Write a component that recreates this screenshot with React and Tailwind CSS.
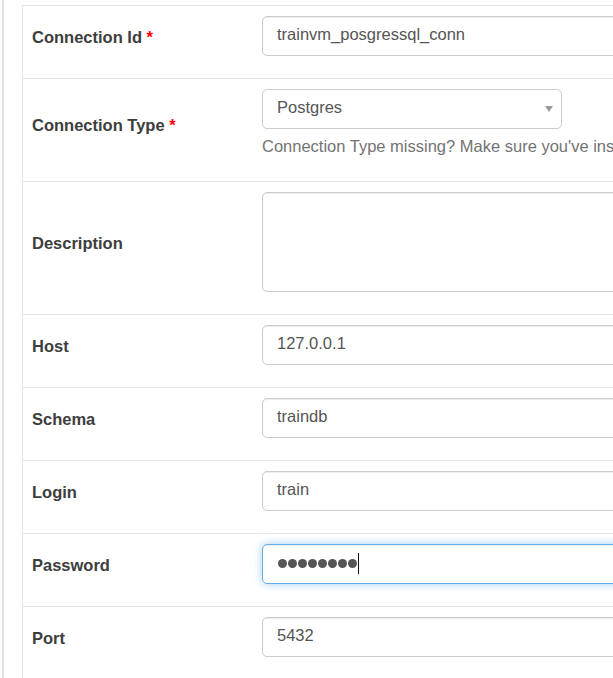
import React from "react";

const font = { fontFamily: '"Liberation Sans", Arial, sans-serif' };

function Label({ children, required }) {
  return (
    <div className="w-[229px] shrink-0 pl-[9px] pt-[11px] pb-[21px] font-bold text-[16.5px] text-[#3d3d3d] leading-[22px]">
      {children}
      {required && <span className="text-[#ff0000]"> *</span>}
    </div>
  );
}

function TextInput({ value }) {
  return (
    <div className="w-[420px] h-[40px] border border-[#cccccc] rounded-[5px] px-[14px] pb-[3px] flex items-center text-[16.5px] text-[#555] shadow-[inset_0_1px_1px_rgba(0,0,0,0.075)]">
      {value}
    </div>
  );
}

function Row({ label, required, children }) {
  return (
    <div className="flex items-center border-t border-[#e6e6e6]">
      <Label required={required}>{label}</Label>
      <div className="shrink-0 pl-[10px] pt-[10px] pb-[22px]">{children}</div>
    </div>
  );
}

export default function App() {
  return (
    <div className="w-[613px] h-[678px] overflow-hidden bg-white flex" style={font}>
      <div className="w-[2px] ml-[2px] bg-[#e2e2e2] shrink-0" />
      <div className="ml-[18px] mt-[5px] border-l border-[#e6e6e6] flex-1 min-w-0 overflow-hidden">
        <Row label="Connection Id" required>
          <TextInput value="trainvm_posgressql_conn" />
        </Row>
        <Row label="Connection Type" required>
          <div className="w-[420px]">
            <div className="w-[300px] h-[40px] border border-[#cccccc] rounded-[5px] pl-[14px] pr-[8px] pb-[3px] flex items-center justify-between text-[16.5px] text-[#555]">
              <span>Postgres</span>
              <svg width="8" height="6" viewBox="0 0 8 6" className="mt-[3px]">
                <path d="M0 0 L8 0 L4 6 Z" fill="#999" />
              </svg>
            </div>
            <div className="mt-[7px] mb-[3px] leading-[20px] text-[16.5px] text-[#737373] whitespace-nowrap overflow-hidden w-[351px]">
              Connection Type missing? Make sure you've ins
            </div>
          </div>
        </Row>
        <Row label="Description">
          <div className="w-[420px] h-[100px] border border-[#cccccc] rounded-[5px] shadow-[inset_0_1px_1px_rgba(0,0,0,0.075)]" />
        </Row>
        <Row label="Host">
          <TextInput value="127.0.0.1" />
        </Row>
        <Row label="Schema">
          <TextInput value="traindb" />
        </Row>
        <Row label="Login">
          <TextInput value="train" />
        </Row>
        <Row label="Password">
          <div className="w-[420px] h-[40px] border border-[#66afe9] rounded-[5px] px-[15px] pb-[2px] flex items-center shadow-[inset_0_1px_1px_rgba(0,0,0,0.075),0_0_8px_rgba(102,175,233,0.6)]">
            <div className="flex gap-[1px]">
              {[0, 1, 2, 3, 4, 5, 6, 7].map((i) => (
                <span key={i} className="w-[9px] h-[9px] rounded-full bg-[#555]" />
              ))}
            </div>
            <span className="w-[1px] h-[21px] bg-[#111] ml-[1px]" />
          </div>
        </Row>
        <Row label="Port">
          <TextInput value="5432" />
        </Row>
      </div>
    </div>
  );
}
